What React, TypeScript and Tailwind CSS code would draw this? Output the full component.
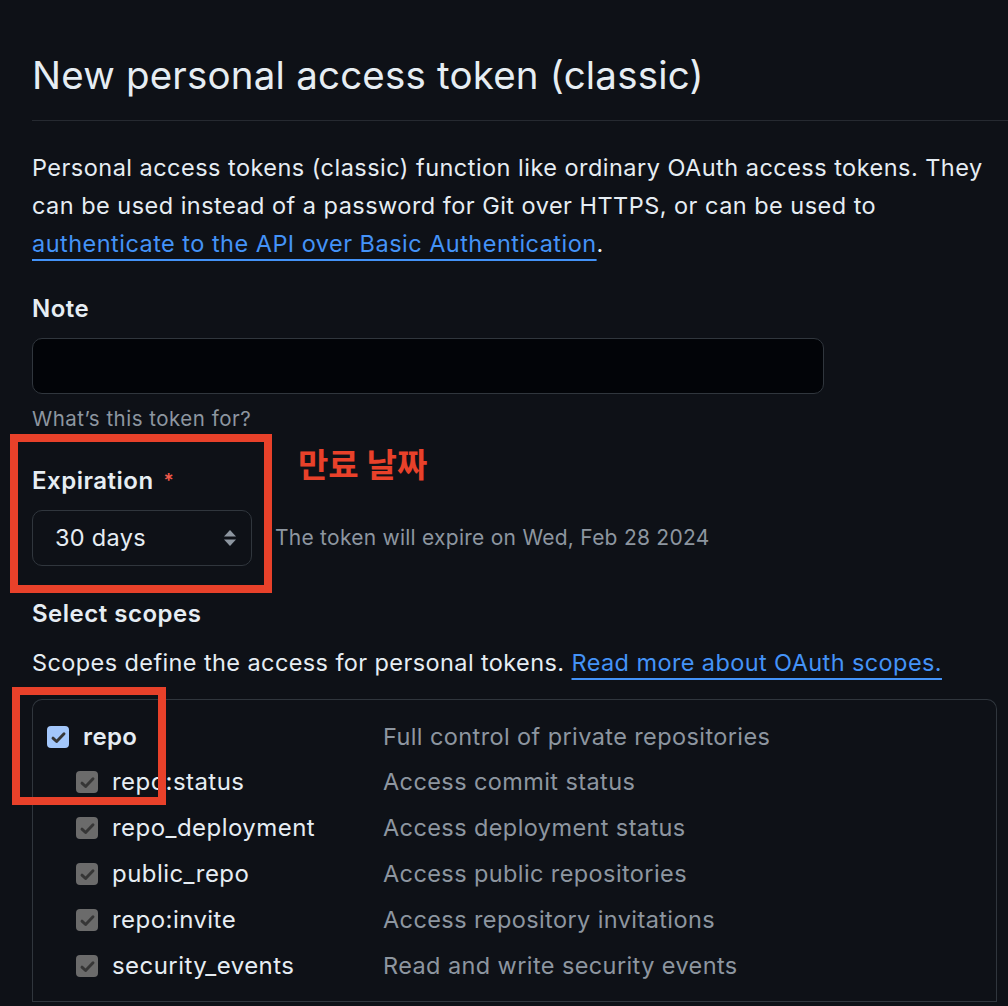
import { useState } from "react";

const scopes = [
  { name: "repo:status", desc: "Access commit status" },
  { name: "repo_deployment", desc: "Access deployment status" },
  { name: "public_repo", desc: "Access public repositories" },
  { name: "repo:invite", desc: "Access repository invitations" },
  { name: "security_events", desc: "Read and write security events" },
];

function Check({ muted }: { muted?: boolean }) {
  return (
    <span
      className={
        "flex h-[22px] w-[22px] shrink-0 items-center justify-center rounded-[4px] " +
        (muted ? "bg-[#6b6b6b]" : "bg-[#a3c7fb]")
      }
    >
      <svg width="17" height="17" viewBox="0 0 16 16" fill="none">
        <path
          d="M2.8 8.6L6.2 11.8L13.2 4.4"
          stroke="#363636"
          strokeWidth="2.7"
          strokeLinecap="round"
          strokeLinejoin="round"
        />
      </svg>
    </span>
  );
}

export default function App() {
  const [note, setNote] = useState("");

  return (
    <div className="h-[1006px] w-[1008px] overflow-hidden bg-[#0e1117] pl-8 font-['Inter','Noto_Sans_CJK_KR',sans-serif] text-[#e6edf3]">
      {/* Header */}
      <div className="border-b border-[#262a31] pb-[22px] pt-[52px]">
        <h1 className="text-[38.5px] leading-[46px] tracking-[0.2px]">
          New personal access token (classic)
        </h1>
      </div>

      <p className="mt-[28px] w-[965px] text-[23.5px] leading-[38px] tracking-[0.47px]">
        Personal access tokens (classic) function like ordinary OAuth access tokens. They
        can be used instead of a password for Git over HTTPS, or can be used to{" "}
        <a className="text-[#4493f8] underline decoration-2 underline-offset-[7px]">
          authenticate to the API over Basic Authentication
        </a>
        .
      </p>

      {/* Note */}
      <div className="mt-[31px] text-[24px] font-semibold leading-[30px] tracking-[0.5px]">Note</div>
      <input
        value={note}
        onChange={(e) => setNote(e.target.value)}
        className="mt-[14px] h-[56px] w-[792px] rounded-[10px] border border-[#30363d] bg-[#020408] px-4 text-[22px] outline-none"
      />
      <div className="mt-[12px] text-[20.5px] leading-[26px] tracking-[0.5px] text-[#8d96a0]">
        What’s this token for?
      </div>

      {/* Expiration */}
      <div className="relative mt-[34px] flex items-start">
        <div className="relative">
          <div className="pointer-events-none absolute -left-[22px] -top-[32px] h-[159px] w-[262px] border-[8px] border-[#e8412a]" />
          <div className="flex items-center text-[24px] font-semibold leading-[30px] tracking-[0.5px]">
            Expiration
            <span className="ml-[10px] text-[19px] text-[#f2594a]">*</span>
          </div>
          <div className="mt-[14px] flex h-[56px] w-[220px] items-center justify-between rounded-[10px] border border-[#30363d] bg-[#0e1117] pl-[22px] pr-[14px] text-[23.5px] tracking-[0.3px]">
            30 days
            <svg width="14" height="22" viewBox="0 0 14 22" fill="#8d96a0">
              <path d="M7 3L13 9.5H1Z" />
              <path d="M7 19L1 12.5H13Z" />
            </svg>
          </div>
        </div>
        <div className="ml-[23px] mt-[58px] text-[21px] leading-[28px] tracking-[0.25px] text-[#8d96a0]">
          The token will expire on Wed, Feb 28 2024
        </div>
        <div className="absolute left-[266px] -top-[25px] text-[33px] font-bold text-[#e8412a]">
          만료 날짜
        </div>
      </div>

      {/* Scopes */}
      <div className="mt-[33px] text-[24px] font-semibold leading-[30px] tracking-[0.5px]">Select scopes</div>
      <p className="mt-[19px] text-[23.5px] leading-[30px] tracking-[0.4px]">
        Scopes define the access for personal tokens.{" "}
        <a className="text-[#4493f8] underline decoration-2 underline-offset-[7px]">
          Read more about OAuth scopes.
        </a>
      </p>

      <div className="relative mt-[21px] w-[965px] rounded-t-[10px] border border-b-0 border-[#30363d] pt-[26px]">
        <div className="pointer-events-none absolute -left-[21px] -top-[13px] h-[118px] w-[154px] border-[8px] border-[#e8412a]" />
        <div className="flex h-[22px] items-center">
          <div className="flex w-[350px] items-center pl-[14px]">
            <Check />
            <span className="ml-[14px] text-[24px] font-semibold tracking-[0.4px]">repo</span>
          </div>
          <span className="text-[23.5px] tracking-[0.4px] text-[#8d96a0]">
            Full control of private repositories
          </span>
        </div>
        <div className="mt-[23px] flex flex-col gap-[24px] pb-[24px]">
          {scopes.map((s) => (
            <div key={s.name} className="flex h-[22px] items-center">
              <div className="flex w-[350px] items-center pl-[43px]">
                <Check muted />
                <span className="ml-[14px] text-[24px] tracking-[0.45px]">{s.name}</span>
              </div>
              <span className="text-[23.5px] tracking-[0.4px] text-[#8d96a0]">{s.desc}</span>
            </div>
          ))}
        </div>
        <div className="border-t border-[#30363d]" />
      </div>
    </div>
  );
}
